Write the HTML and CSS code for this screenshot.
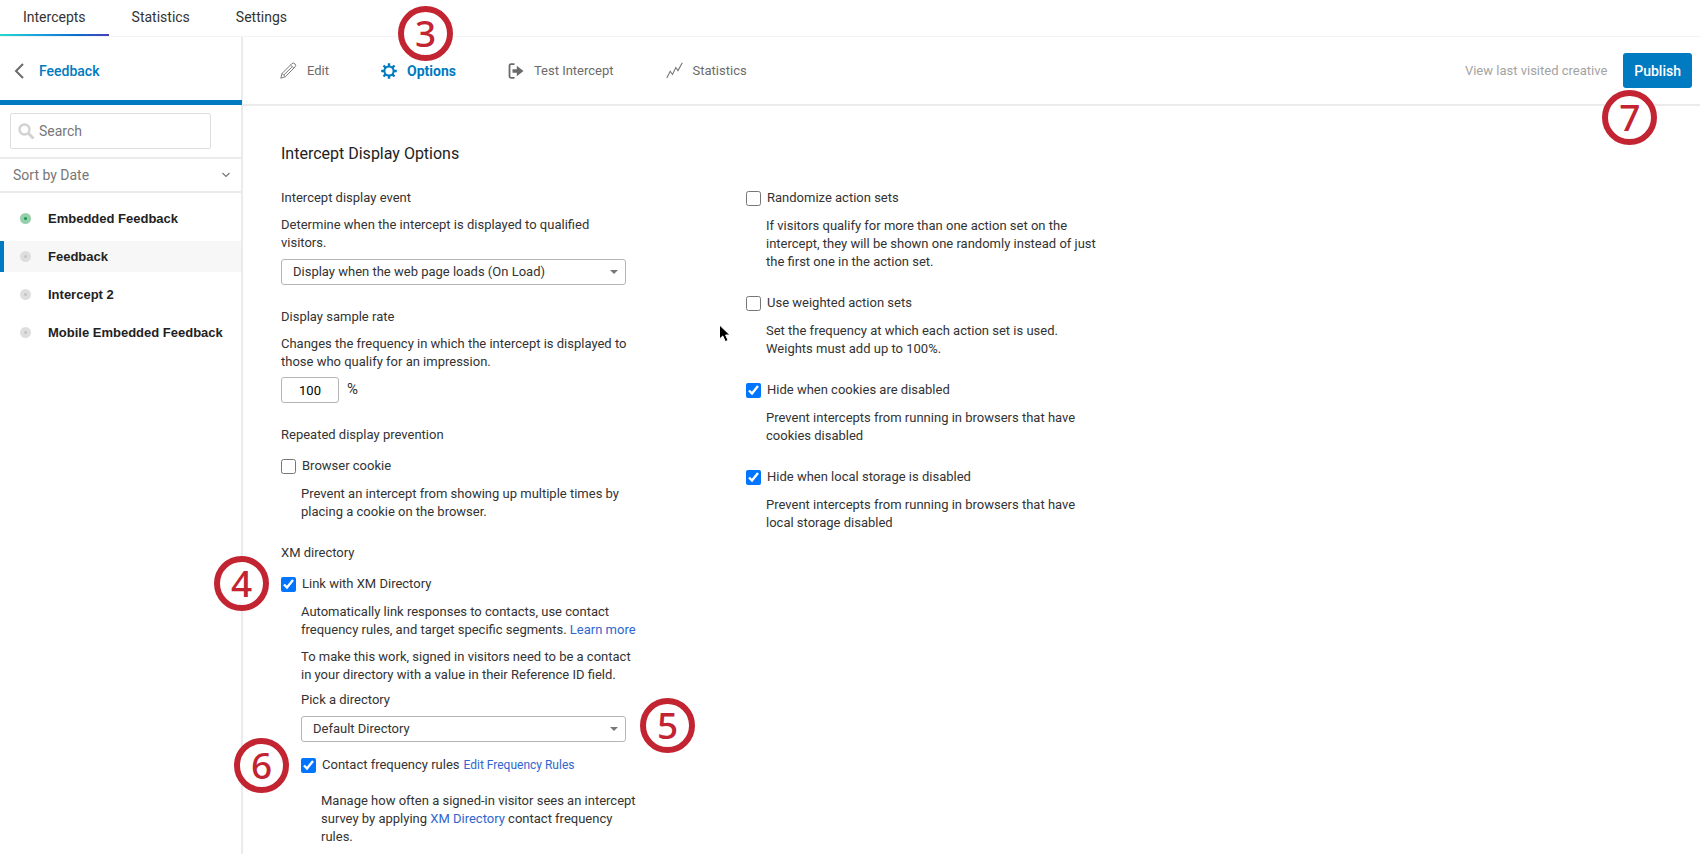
FILE: index.html
```html
<!DOCTYPE html>
<html lang="en">
<head>
<meta charset="utf-8">
<title>Intercept Display Options</title>
<link rel="stylesheet" href="styles.css">
</head>
<body>
<nav class="topnav">
  <a class="topnav-tab is-active" href="#">Intercepts</a>
  <a class="topnav-tab" href="#">Statistics</a>
  <a class="topnav-tab" href="#">Settings</a>
</nav>
<div class="layout">
  <aside class="sidebar">
    <a class="back" href="#">
      <svg width="10" height="16" viewBox="0 0 10 16" fill="none" stroke="#6b6b6b" stroke-width="2"><path d="M9 1 2 8l7 7"/></svg>
      <span>Feedback</span>
    </a>
    <div class="search">
      <label class="search-box">
        <svg width="17" height="17" viewBox="0 0 17 17" fill="none" stroke="#d2d2d2"><circle cx="6.5" cy="6.5" r="5" stroke-width="2.4"/><path d="m10.5 10.5 5 5" stroke-width="3"/></svg>
        <input class="search-input" type="text" placeholder="Search" aria-label="Search">
      </label>
    </div>
    <button class="sort" type="button">
      <span>Sort by Date</span>
      <svg width="8" height="6" viewBox="0 0 8 6" fill="none" stroke="#777" stroke-width="1.2"><path d="m.5 1 3.500 3.500L7.500 1"/></svg>
    </button>
    <ul class="list">
      <li><a class="item" href="#"><span class="dot is-on"></span>Embedded Feedback</a></li>
      <li><a class="item is-active" href="#"><span class="dot"></span>Feedback</a></li>
      <li><a class="item" href="#"><span class="dot"></span>Intercept 2</a></li>
      <li><a class="item" href="#"><span class="dot"></span>Mobile Embedded Feedback</a></li>
    </ul>
  </aside>
  <main class="main">
    <div class="toolbar">
      <a class="tool" href="#">
        <svg width="17" height="17" viewBox="0 0 17 17" fill="none" stroke="#7a7a7a" stroke-linejoin="round"><path d="M.8 16.200 2 11.500 11.800 1.700q1.400-1.300 3 0 1.700 1.600.4 3.100L5.400 14.700zM2 11.500l3.400 3.200M10.500 3l3.500 3.300M4 12.800l7.800-7.600"/></svg>
        <span>Edit</span>
      </a>
      <a class="tool is-active" href="#">
        <svg width="16" height="16" viewBox="0 0 16 16" fill="none" stroke="#007ac0"><circle cx="8" cy="8" r="4.600" stroke-width="2"/><g stroke-width="2.400"><path d="M8 .2v3M8 12.800v3M.2 8h3M12.800 8h3M2.500 2.500l2.100 2.100M11.400 11.400l2.100 2.100M2.500 13.500l2.100-2.100M11.400 4.600l2.100-2.100"/></g></svg>
        <span>Options</span>
        <span class="callout callout-options">3</span>
      </a>
      <a class="tool" href="#">
        <svg width="16" height="16" viewBox="0 0 16 16" fill="#6b6b6b"><path d="M6.500 1.200H3Q1.500 1.200 1.500 2.700v10.600q0 1.500 1.500 1.500h3.500" fill="none" stroke="#6b6b6b" stroke-width="1.800"/><path d="M4.500 6.200h4.300V2.700L15.500 8l-6.700 5.300V9.800H4.500z"/></svg>
        <span>Test Intercept</span>
      </a>
      <a class="tool" href="#">
        <svg width="17" height="17" viewBox="0 0 17 17" fill="none" stroke="#777" stroke-width="1.100"><path d="m.8 16 3.400-6.800 2.300 3.300 3.300-7L12 8.600 16.300.8"/></svg>
        <span>Statistics</span>
      </a>
      <div class="toolbar-end">
        <a class="last" href="#">View last visited creative</a>
        <div class="anchor">
          <button class="publish" type="button">Publish</button>
          <span class="callout callout-publish">7</span>
        </div>
      </div>
    </div>
    <form class="content">
      <h1 class="heading">Intercept Display Options</h1>
      <div class="columns">
        <div class="column">
          <section>
            <label class="title" for="event">Intercept display event</label>
            <p class="text">Determine when the intercept is displayed to qualified<br>visitors.</p>
            <div class="select">
              <select id="event"><option>Display when the web page loads (On Load)</option></select>
            </div>
          </section>
          <section>
            <label class="title" for="rate">Display sample rate</label>
            <p class="text">Changes the frequency in which the intercept is displayed to<br>those who qualify for an impression.</p>
            <div class="rate"><input class="rate-input" id="rate" type="text" value="100"><span>%</span></div>
          </section>
          <section>
            <h2 class="title">Repeated display prevention</h2>
            <label class="check check-first"><input type="checkbox"><span>Browser cookie</span></label>
            <div class="nested">
              <p class="text">Prevent an intercept from showing up multiple times by<br>placing a cookie on the browser.</p>
            </div>
          </section>
          <section>
            <h2 class="title">XM directory</h2>
            <div class="anchor">
              <label class="check check-first"><input type="checkbox" checked><span>Link with XM Directory</span></label>
              <span class="callout callout-link">4</span>
            </div>
            <div class="nested">
              <p class="text">Automatically link responses to contacts, use contact<br>frequency rules, and target specific segments. <a class="link" href="#">Learn more</a></p>
              <p class="text">To make this work, signed in visitors need to be a contact<br>in your directory with a value in their Reference ID field.</p>
              <label class="title pick" for="directory">Pick a directory</label>
              <div class="select">
                <select id="directory"><option>Default Directory</option></select>
                <span class="callout callout-directory">5</span>
              </div>
              <div class="anchor rules">
                <label class="check"><input type="checkbox" checked><span>Contact frequency rules</span></label>
                <a class="link link-small" href="#">Edit Frequency Rules</a>
                <span class="callout callout-rules">6</span>
              </div>
              <div class="nested">
                <p class="text rules-text">Manage how often a signed-in visitor sees an intercept<br>survey by applying <a class="link" href="#">XM Directory</a> contact frequency<br>rules.</p>
              </div>
            </div>
          </section>
        </div>
        <div class="column">
          <section>
            <label class="check"><input type="checkbox"><span>Randomize action sets</span></label>
            <div class="nested"><p class="text">If visitors qualify for more than one action set on the<br>intercept, they will be shown one randomly instead of just<br>the first one in the action set.</p></div>
          </section>
          <section>
            <label class="check"><input type="checkbox"><span>Use weighted action sets</span></label>
            <div class="nested"><p class="text">Set the frequency at which each action set is used.<br>Weights must add up to 100%.</p></div>
            <svg class="cursor" width="14" height="20" viewBox="0 0 14 20"><path d="M1.500 1v14l3.300-3 2.500 5.600 2.800-1.200-2.500-5.400h4.300z" fill="#000" stroke="#fff" stroke-width="1"/></svg>
          </section>
          <section>
            <label class="check"><input type="checkbox" checked><span>Hide when cookies are disabled</span></label>
            <div class="nested"><p class="text">Prevent intercepts from running in browsers that have<br>cookies disabled</p></div>
          </section>
          <section>
            <label class="check"><input type="checkbox" checked><span>Hide when local storage is disabled</span></label>
            <div class="nested"><p class="text">Prevent intercepts from running in browsers that have<br>local storage disabled</p></div>
          </section>
        </div>
      </div>
    </form>
  </main>
</div>
</body>
</html>
```
FILE: styles.css
```css
* { box-sizing: border-box; }

body {
  margin: 0;
  min-height: 100vh;
  display: flex;
  flex-direction: column;
  background: #fff;
  color: #333;
  font: 13px/18px Roboto, "Liberation Sans", sans-serif;
}

a { color: inherit; text-decoration: none; }
svg { display: block; flex: none; }
h1, h2, p, ul { margin: 0; padding: 0; font-weight: 400; }
ul { list-style: none; }
input, select, button { font: inherit; color: inherit; }

.topnav {
  display: flex;
  height: 37px;
  border-bottom: 1px solid #f3f3f3;
  font-size: 14px;
}
.topnav-tab { padding: 8px 23px; position: relative; }
.topnav-tab.is-active::after {
  content: "";
  position: absolute;
  left: 0;
  right: 0;
  bottom: 0;
  height: 2px;
  background: linear-gradient(90deg, #21dbcb, #1b9fe0 35%, #0b6ed0 70%, #4a3db8);
}

.layout { flex: 1; display: flex; }

.sidebar { flex: none; width: 243px; border-right: 2px solid #ebebeb; }
.back {
  display: flex;
  align-items: center;
  gap: 15px;
  height: 68px;
  margin-right: -1px;
  padding: 4px 14px 0;
  border-bottom: 5px solid #007ac0;
  color: #007ac0;
  font-size: 14px;
  font-weight: 500;
}
.search { padding: 8px 30px 8px 10px; border-bottom: 2px solid #ebebeb; }
.search-box {
  display: flex;
  align-items: center;
  gap: 4px;
  height: 36px;
  padding: 0 7px;
  border: 1px solid #dedede;
  border-radius: 2px;
}
.search-input { flex: 1; min-width: 0; padding: 0; border: 0; outline: 0; background: none; font-size: 14px; }
.search-input::placeholder { color: #777; }
.sort {
  display: flex;
  align-items: center;
  justify-content: space-between;
  width: 100%;
  height: 34px;
  padding: 0 11px 0 13px;
  border: 0;
  border-bottom: 2px solid #ebebeb;
  background: none;
  color: #777;
  font-size: 14px;
}
.list { display: grid; gap: 7px; padding-top: 10px; }
.item {
  display: flex;
  align-items: center;
  gap: 17px;
  height: 31px;
  padding-left: 16px;
  border-left: 4px solid transparent;
  color: #222;
  font-weight: 700;
  font-family: "Liberation Sans", sans-serif;
}
.item.is-active { border-left-color: #007ac0; background: #f7f7f7; }
.dot { width: 11px; height: 11px; border: 4px solid #dedede; border-radius: 50%; background: #c4c4c4; }
.dot.is-on { border-color: #97cfac; background: #109a49; }

.main { flex: 1; min-width: 0; }
.toolbar {
  display: flex;
  align-items: center;
  gap: 52px;
  height: 69px;
  padding: 0 8px 0 37px;
  border-bottom: 2px solid #ebebeb;
  color: #6b6b6b;
}
.tool { display: flex; align-items: center; gap: 10px; position: relative; }
.tool.is-active { color: #007ac0; font-size: 14px; font-weight: 700; }
.toolbar-end { display: flex; align-items: center; gap: 16px; margin-left: auto; }
.last { color: #a3a3a3; }
.publish {
  height: 35px;
  padding: 0 11px;
  border: 0;
  border-radius: 3px;
  background: #007ac0;
  color: #fff;
  font-size: 14px;
  font-weight: 500;
}

.content { padding: 36px 38px 8px; }
.heading { margin-bottom: 23px; font-size: 16px; line-height: 24px; color: #222; }
.columns { display: flex; gap: 120px; align-items: flex-start; white-space: nowrap; }
.column { display: grid; gap: 23px; }
.column:first-child { width: 345px; }
.column section { position: relative; min-width: 0; }
.title { display: block; font-size: 13px; line-height: 18px; }
.text { margin-top: 10px; }
.title + .text, .text + .text { margin-top: 9px; }
.nested { padding-left: 20px; }
.link { color: #2f66d0; }
.link-small { font-size: 12px; }

.select { position: relative; margin-top: 7px; }
.select select {
  display: block;
  appearance: none;
  width: 100%;
  height: 26px;
  padding: 0 24px 0 11px;
  border: 1px solid #b5b5b5;
  border-radius: 3px;
  background: #fff;
}
.select::after {
  content: "";
  position: absolute;
  right: 8px;
  top: 11px;
  border: 4px solid transparent;
  border-top-color: #777;
  border-bottom: 0;
}
.rate { display: flex; gap: 8px; margin-top: 6px; font-size: 15px; line-height: 24px; }
.rate-input {
  width: 58px;
  height: 26px;
  padding: 0;
  border: 1px solid #b5b5b5;
  border-radius: 3px;
  color: #000;
  font-size: 13px;
  text-align: center;
}

.check { display: flex; align-items: center; gap: 6px; height: 18px; }
.check input { flex: none; width: 15px; height: 15px; margin: 0; accent-color: #0075ff; }
.check-first { margin-top: 13px; }
.pick { margin-top: 7px; }
.anchor { position: relative; }
.rules { display: flex; gap: 4px; margin-top: 14px; }
.rules-text { margin-top: 18px; }

.callout {
  position: absolute;
  width: 55px;
  height: 55px;
  border: 6px solid #c22431;
  border-radius: 50%;
  background: #fff;
  color: #c22431;
  font: 500 37px/42px "Noto Sans", "Open Sans", sans-serif;
  text-align: center;
  pointer-events: none;
}
.callout-options { left: 17px; top: -56px; }
.callout-publish { left: -21px; top: 37px; }
.callout-link { left: -67px; top: -19px; }
.callout-directory { left: 339px; top: -18px; }
.callout-rules { left: -67px; top: -18px; }
.cursor { position: absolute; left: -28px; top: 30px; }
```
